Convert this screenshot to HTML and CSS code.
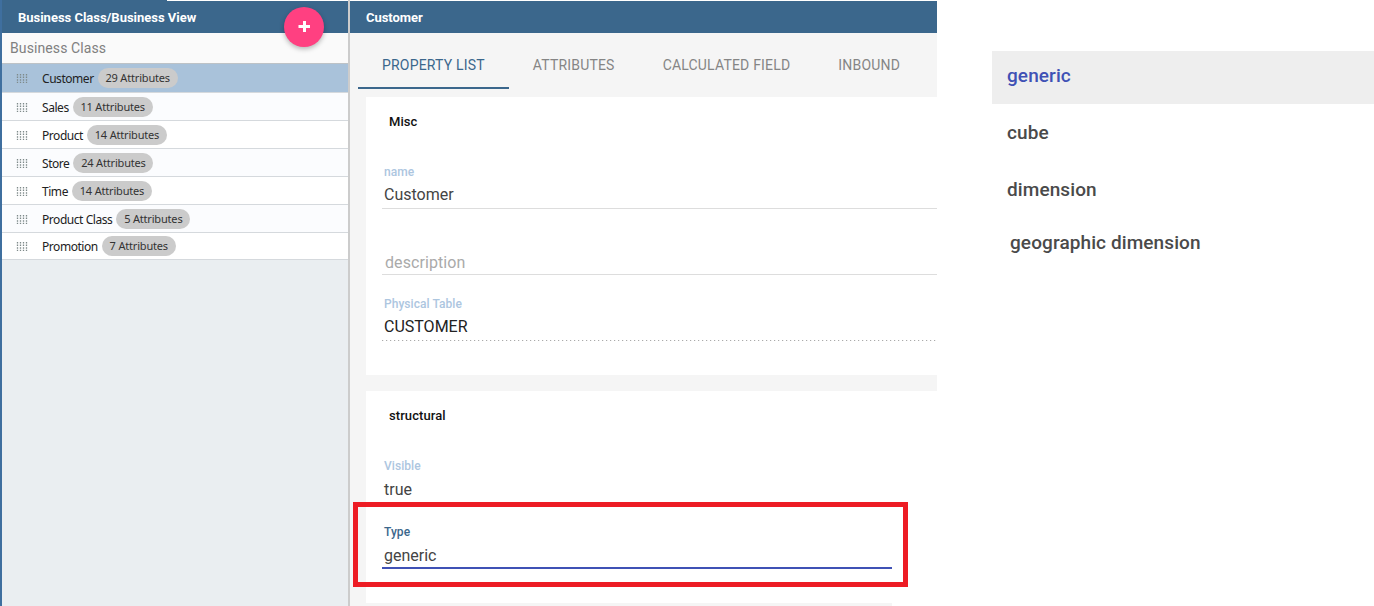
FILE: index.html
```html
<!DOCTYPE html>
<html lang="en">
<head>
<meta charset="utf-8">
<title>Business Class</title>
<link rel="stylesheet" href="styles.css">
</head>
<body>
<svg class="defs" width="0" height="0"><symbol id="grip" viewBox="0 0 12 10"><path d="M1.5 1V10M4.5 1V10M7.5 1V10M10.5 1V10" fill="none" stroke="#7f8a8a" stroke-width="1.3" stroke-dasharray="1.5 1.1"/></symbol></svg>
<div class="app">
  <aside class="sidebar">
    <header class="bar side-bar"><span class="side-title">Business Class/Business View</span>
      <button class="add" aria-label="Add"><svg width="12" height="12" viewBox="0 0 12 12"><path d="M6.5 0V11M.5 5.5H12" stroke="#fff" stroke-width="3"/></svg></button>
    </header>
    <div class="subheader"><span>Business Class</span></div>
    <ul class="list">
      <li class="row selected"><svg class="grip"><use href="#grip"/></svg><span class="label">Customer</span><span class="chip">29 Attributes</span></li>
      <li class="row odd"><svg class="grip"><use href="#grip"/></svg><span class="label">Sales</span><span class="chip">11 Attributes</span></li>
      <li class="row"><svg class="grip"><use href="#grip"/></svg><span class="label">Product</span><span class="chip">14 Attributes</span></li>
      <li class="row odd"><svg class="grip"><use href="#grip"/></svg><span class="label">Store</span><span class="chip">24 Attributes</span></li>
      <li class="row"><svg class="grip"><use href="#grip"/></svg><span class="label">Time</span><span class="chip">14 Attributes</span></li>
      <li class="row odd"><svg class="grip"><use href="#grip"/></svg><span class="label">Product Class</span><span class="chip small">5 Attributes</span></li>
      <li class="row last"><svg class="grip"><use href="#grip"/></svg><span class="label">Promotion</span><span class="chip small">7 Attributes</span></li>
    </ul>
  </aside>
  <main class="detail">
    <header class="bar detail-bar"><span>Customer</span></header>
    <nav class="tabs">
      <a class="tab active">PROPERTY LIST</a><a class="tab">ATTRIBUTES</a><a class="tab">CALCULATED FIELD</a><a class="tab">INBOUND</a>
    </nav>
    <section class="card misc">
      <h2>Misc</h2>
      <div class="field name"><label>name</label><span class="value">Customer</span></div>
      <div class="field description"><span class="placeholder">description</span></div>
      <div class="field table"><label>Physical Table</label><span class="value dark">CUSTOMER</span></div>
    </section>
    <section class="card structural">
      <h2>structural</h2>
      <div class="field visible"><label>Visible</label><span class="value">true</span></div>
      <div class="field type"><label>Type</label><span class="value">generic</span></div>
    </section>
    <div class="highlight"></div>
  </main>
  <div class="options">
    <div class="option chosen">generic</div>
    <div class="option">cube</div>
    <div class="option third">dimension</div>
    <div class="option geo">geographic dimension</div>
  </div>
</div>
</body>
</html>
```
FILE: styles.css
```css
* { box-sizing: border-box; }
body { margin: 0; background: #fff; font-family: Roboto, sans-serif; overflow: hidden; }
.defs { position: absolute; }
.app { display: flex; height: 606px; }
.sidebar { width: 350px; border-left: 2px solid #3f6f9f; border-right: 2px solid #ccc; background: #eaeef1; }
.bar { height: 33px; background: #3b678c; color: #fff; font-size: 13px; font-weight: 700; line-height: 35px; }
.side-bar { position: relative; padding-left: 16px; background: linear-gradient(#fff, #fff) 165px 0 / 181px 1px no-repeat #3b678c; }
.side-title { letter-spacing: -.02px; }
.add { position: absolute; left: 282px; top: 7px; width: 40px; height: 40px; border: 0; border-radius: 50%; padding: 0; background: #ff4081; display: flex; align-items: center; justify-content: center; box-shadow: 0 2px 5px rgba(0, 0, 0, .28); }
.subheader { height: 31px; background: #fafafa; border-bottom: 1px solid #bdc2c6; padding-left: 8px; font-size: 14px; line-height: 30px; color: #808080; letter-spacing: .1px; }
.list { list-style: none; margin: 0; padding: 0; font-family: "Noto Sans", sans-serif; }
.row { height: 28px; display: flex; align-items: center; padding-left: 14px; background: #fff; border-bottom: 1px solid #d5d9dd; }
.row.odd { background: #fbfcfe; }
.row.selected { height: 29px; background: #a9c2da; }
.row.last { height: 27px; }
.grip { width: 12px; height: 10px; margin-right: 14px; }
.label { font-size: 12px; line-height: 20px; color: #222; letter-spacing: -.45px; padding-top: 2px; }
.chip { width: 80px; height: 20px; margin-left: 4px; border-radius: 10px; background: #cbcbcb; font-size: 11px; line-height: 20px; text-align: center; color: #333; letter-spacing: -.18px; white-space: nowrap; }
.chip.small { width: 74px; }
.detail { position: relative; width: 587px; background: #f5f5f5; }
.detail-bar { border-top: 1px solid #fff; padding-left: 16px; line-height: 33px; letter-spacing: -.05px; }
.tabs { height: 64px; display: flex; padding: 0 0 8px 8px; font-size: 14px; line-height: 65px; color: #858585; }
.tab { padding: 0 24px; letter-spacing: .19px; white-space: nowrap; }
.tab.active { color: #3b678c; border-bottom: 2px solid #3b678c; }
.card { margin-left: 16px; background: #fff; }
.misc { height: 278px; margin-bottom: 16px; padding-top: 15px; }
.structural { height: 212px; padding-top: 15px; }
h2 { margin: 0; padding-left: 23px; font-size: 13px; line-height: 20px; height: 20px; font-weight: 500; color: #111; letter-spacing: .08px; }
.field { margin-left: 16px; display: flex; flex-direction: column; justify-content: flex-end; }
.field label { padding-left: 2px; font-size: 12px; line-height: 16px; font-weight: 500; color: #adc6df; letter-spacing: .05px; }
.value, .placeholder { padding-left: 2px; font-size: 16px; line-height: 30px; height: 29px; color: #444; }
.value.dark { color: #222; }
.placeholder { padding-left: 3px; height: 26px; color: #aaa; letter-spacing: .08px; }
.name { height: 77px; border-bottom: 1px solid #ddd; }
.name .value { height: 28px; }
.description { height: 66px; border-bottom: 1px solid #ddd; }
.table { height: 66px; background: repeating-linear-gradient(90deg, #aaa 0 1px, #eee 1px 2px, #fff 2px 4px) 0 100% / 100% 1px no-repeat; }
.visible { height: 77px; }
.visible .value { line-height: 32px; }
.type { height: 66px; width: 510px; border-bottom: 2px solid #3f51b5; }
.type label { color: #3b678c; }
.type .value { height: 27px; line-height: 32px; }
.highlight { position: absolute; left: 3px; top: 502px; width: 555px; height: 85px; border: 5px solid #ed1c24; }
.options { flex: 1; padding: 51px 0 0 55px; font-size: 19px; font-weight: 500; color: #4a4a4a; letter-spacing: .1px; }
.option { height: 57px; padding-left: 15px; line-height: 49px; }
.option.chosen { height: 53px; margin-bottom: 4px; background: #eee; color: #3f51b5; }
.option.third { height: 53px; }
.option.geo { padding-left: 18px; }
/* the last card ends above the viewport's lower edge */
.detail::after { content: ""; position: absolute; right: 0; bottom: 0; width: 45px; height: 3px; background: #fff; }
```
